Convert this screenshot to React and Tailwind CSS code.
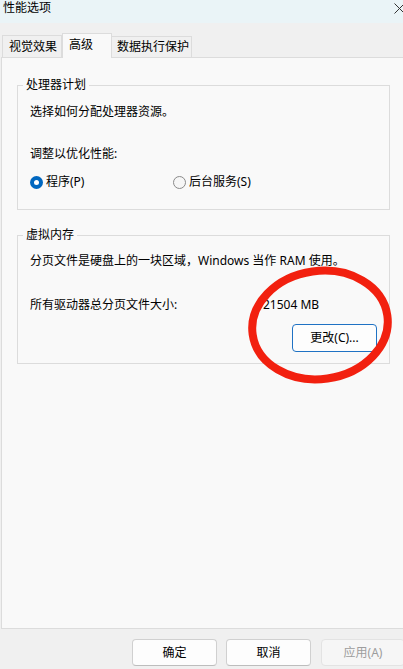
import React from "react";

const font = { fontFamily: '"Noto Sans", "Noto Sans CJK SC", sans-serif' };

function Radio({ checked }) {
  return checked ? (
    <span className="w-[13px] h-[13px] rounded-full bg-[#0067c0] flex items-center justify-center shrink-0">
      <span className="w-[5px] h-[5px] rounded-full bg-white" />
    </span>
  ) : (
    <span className="w-[13px] h-[13px] rounded-full border border-[#8a8a8a] bg-[#f6f6f6] shrink-0" />
  );
}

export default function App() {
  return (
    <div
      className="w-[403px] h-[669px] bg-[#f0f0f0] relative overflow-hidden text-[12px] text-black flex flex-col"
      style={font}
    >
      {/* title bar */}
      <div className="h-[23px] bg-[#eaf4f7] flex items-start justify-between pl-[3px] shrink-0">
        <span className="leading-[14px] pt-[1px]">性能选项</span>
        <svg width="11" height="11" viewBox="0 0 11 11" className="mt-[3px] mr-[-2px]">
          <path d="M0.5 0.5 L10.5 10.5 M10.5 0.5 L0.5 10.5" stroke="#333" strokeWidth="1" />
        </svg>
      </div>

      {/* tabs */}
      <div className="h-[34px] flex items-end pl-[2px] shrink-0 relative z-10">
        <div className="w-[60px] h-[22px] border border-b-0 border-[#dcdcdc] bg-[#f0f0f0] pl-[6px] pt-[4px] leading-[14px]">
          视觉效果
        </div>
        <div className="w-[50px] h-[25px] border border-b-0 border-[#dcdcdc] bg-[#f9f9f9] pl-[6px] pt-[4px] leading-[14px] -mb-[1px]">
          高级
        </div>
        <div className="w-[80px] h-[21px] border border-b-0 border-l-0 border-[#dcdcdc] bg-[#f0f0f0] pl-[5px] pt-[3px] leading-[14px]">
          数据执行保护
        </div>
      </div>

      {/* panel */}
      <div className="ml-[1px] w-[412px] h-[572px] border border-[#dcdcdc] bg-[#f9f9f9] shrink-0 pl-[15px] pt-[20px]">
        <fieldset className="w-[373px] border border-[#dcdcdc] p-0 m-0 min-w-0">
          <legend className="ml-[5px] px-[3px] leading-[14px]">处理器计划</legend>
          <div className="pl-[12px] pt-[12px] pb-[19px]">
            <div className="leading-[16px]">选择如何分配处理器资源。</div>
            <div className="leading-[16px] mt-[26px]">调整以优化性能:</div>
            <div className="flex items-center h-[16px] mt-[12px]">
              <div className="w-[143px] flex items-center gap-[3px]">
                <Radio checked />
                <span className="leading-[16px]">程序(P)</span>
              </div>
              <div className="flex items-center gap-[3px]">
                <Radio />
                <span className="leading-[16px]">后台服务(S)</span>
              </div>
            </div>
          </div>
        </fieldset>

        <fieldset className="w-[373px] border border-[#dcdcdc] p-0 mt-[18px] min-w-0">
          <legend className="ml-[5px] px-[3px] leading-[14px]">虚拟内存</legend>
          <div className="pl-[12px] pt-[11px] pb-[11px]">
            <div className="leading-[16px]">分页文件是硬盘上的一块区域，Windows 当作 RAM 使用。</div>
            <div className="flex leading-[16px] mt-[28px]">
              <span className="w-[233px]">所有驱动器总分页文件大小:</span>
              <span>21504 MB</span>
            </div>
            <div className="mt-[11px] ml-[262px] w-[85px] h-[28px] rounded-[4px] border border-[#1f72c4] bg-[#fdfdfd] flex items-center justify-center leading-[16px]">
              更改(C)...
            </div>
          </div>
        </fieldset>
      </div>

      {/* bottom buttons */}
      <div className="flex pl-[132px] mt-[10px] shrink-0">
        <div className="w-[85px] h-[27px] shrink-0 rounded-[4px] border border-[#d0d0d0] border-b-[#bdbdbd] bg-[#fdfdfd] flex items-center justify-center">
          确定
        </div>
        <div className="w-[85px] h-[27px] shrink-0 ml-[9px] rounded-[4px] border border-[#d0d0d0] border-b-[#bdbdbd] bg-[#fdfdfd] flex items-center justify-center">
          取消
        </div>
        <div className="w-[84px] h-[27px] shrink-0 ml-[10px] rounded-[4px] border border-[#e3e3e3] bg-[#f6f6f6] flex items-center justify-center text-[#9d9d9d]">
          应用(A)
        </div>
      </div>

      {/* red annotation ellipse */}
      <svg
        className="absolute left-0 top-0 pointer-events-none"
        width="403"
        height="669"
        viewBox="0 0 403 669"
      >
        <ellipse
          cx="320"
          cy="325"
          rx="68"
          ry="54"
          transform="rotate(-8 320 325)"
          fill="none"
          stroke="#f2200f"
          strokeWidth="8"
        />
      </svg>
    </div>
  );
}
